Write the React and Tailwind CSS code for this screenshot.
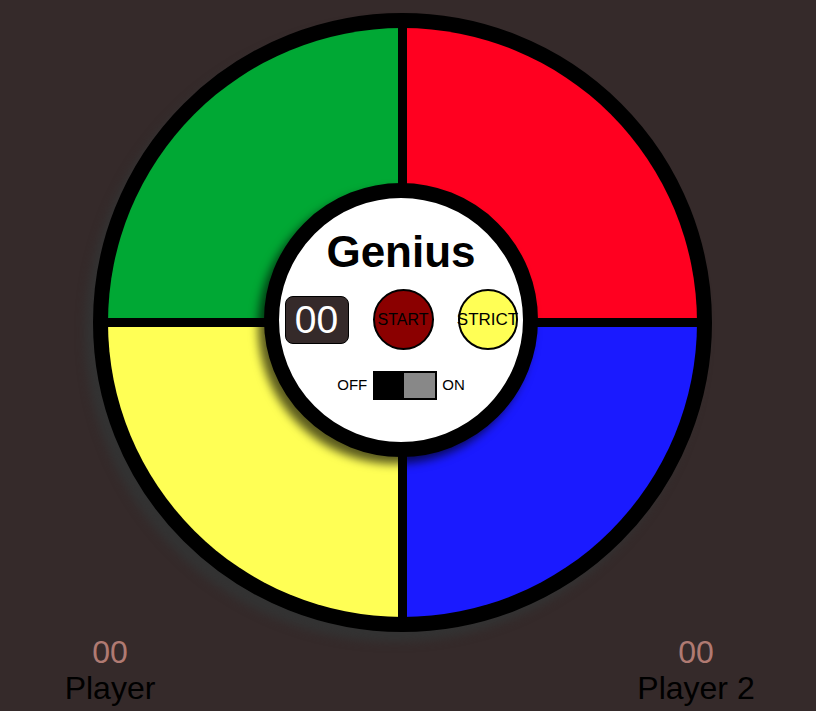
import React from 'react';

const quadrants = ['bg-[#00a834]', 'bg-[#ff0020]', 'bg-[#ffff55]', 'bg-[#1a1aff]'];

export default function App() {
  return (
    <div className="w-[816px] h-[711px] overflow-hidden bg-[#352a2a] font-['Liberation_Sans',Arial,sans-serif]">
      {/* Board */}
      <div className="pl-[93px] pt-[13px]">
        <div className="relative w-[619px] h-[619px] rounded-full border-[15px] border-black bg-black overflow-hidden shadow-[-8px_10px_10px_#333]">
          <div className="grid grid-cols-2 grid-rows-2 gap-[9px] w-full h-full">
            {quadrants.map((c) => (
              <div key={c} className={c} />
            ))}
          </div>
        </div>
      </div>

      {/* Control center sits over the board */}
      <div className="absolute left-[264px] top-[183px] w-[274px] h-[274px] rounded-full border-[15px] border-black bg-white shadow-[-6px_7px_10px_rgba(0,0,0,0.65)] flex flex-col items-center">
        <h1 className="mt-[29px] text-[44px] font-bold leading-[50px] text-black">Genius</h1>
        <div className="mt-[12px] flex items-center gap-[24px]">
          <div className="w-[64px] h-[48px] rounded-[8px] border-[1.5px] border-black bg-[#352a2a] flex items-center justify-center text-white text-[39px] leading-none">
            00
          </div>
          <button className="w-[61px] h-[61px] rounded-full border-2 border-black bg-[#8b0000] flex items-center justify-center text-black whitespace-nowrap">
            <span className="-mx-2 text-[16px]">START</span>
          </button>
          <button className="w-[60px] h-[61px] rounded-full border-2 border-black bg-[#ffff55] flex items-center justify-center text-black whitespace-nowrap">
            <span className="-mx-2 text-[17px]">STRICT</span>
          </button>
        </div>
        <div className="mt-[21px] flex items-center text-[15px] text-black">
          <span className="mr-[6px]">OFF</span>
          <div className="w-[64px] h-[29px] border-2 border-black bg-black flex justify-end">
            <div className="w-[31px] h-full bg-[#888]" />
          </div>
          <span className="ml-[5px]">ON</span>
        </div>
      </div>

      {/* Players */}
      <div className="mt-[2px] flex justify-between text-[32px] leading-[36px]">
        <div className="w-[220px] flex flex-col items-center">
          <span className="text-[#b07a72]">00</span>
          <span className="text-black">Player</span>
        </div>
        <div className="w-[240px] flex flex-col items-center">
          <span className="text-[#b07a72]">00</span>
          <span className="text-black">Player 2</span>
        </div>
      </div>
    </div>
  );
}
